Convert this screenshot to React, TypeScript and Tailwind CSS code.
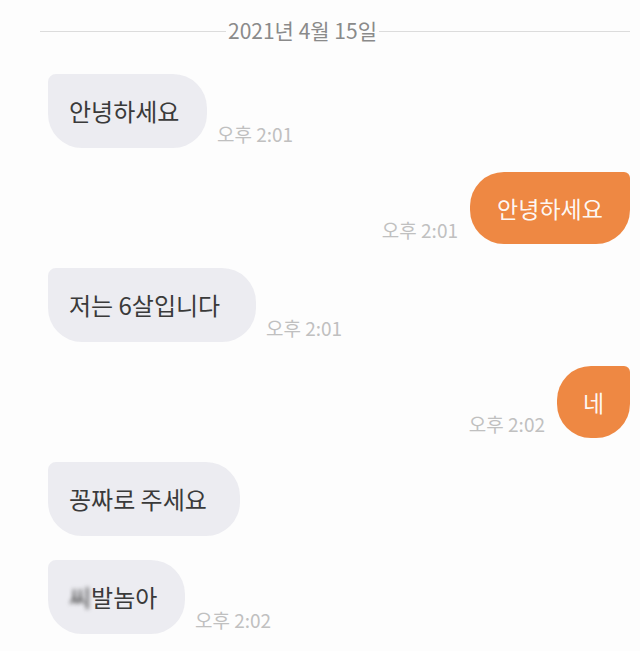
import { ReactNode } from 'react';

const FONT = { fontFamily: '"Noto Sans CJK KR", "Noto Sans", sans-serif' };

function Time({ children }: { children: ReactNode }) {
  return <span className="mb-[5px] text-[19px] leading-none text-[#c0c0c0] whitespace-nowrap">{children}</span>;
}

function Received({ children, time, width }: { children: ReactNode; time?: string; width: number }) {
  return (
    <div className="flex items-end gap-[10px]">
      <div
        className="flex h-[74px] items-center rounded-[34px] rounded-tl-[8px] bg-[#ececf1] pl-[21px] text-[24px] text-[#3a3a3a]"
        style={{ width }}
      >
        {children}
      </div>
      {time && <Time>{time}</Time>}
    </div>
  );
}

function Sent({ children, time, width }: { children: ReactNode; time: string; width: number }) {
  return (
    <div className="flex items-end justify-end gap-[12px]">
      <Time>{time}</Time>
      <div
        className="flex h-[72px] items-center justify-center rounded-[34px] rounded-tr-[6px] bg-[#ee8843] text-[23px] text-white/95"
        style={{ width }}
      >
        {children}
      </div>
    </div>
  );
}

export default function App() {
  return (
    <div className="h-[651px] w-[640px] overflow-hidden bg-[#fdfdfd] pl-[48px] pr-[10px]" style={FONT}>
      <div className="-ml-[8px] flex h-[60px] items-center pt-[2px]">
        <div className="h-px w-[186px] bg-[#dcdcdc]" />
        <span className="px-[2px] text-[21px] text-[#8a8a8a]">2021년 4월 15일</span>
        <div className="h-px flex-1 bg-[#dcdcdc]" />
      </div>
      <div className="mt-[14px] flex flex-col gap-[24px]">
        <Received time="오후 2:01" width={159}>안녕하세요</Received>
        <Sent time="오후 2:01" width={160}>안녕하세요</Sent>
        <Received time="오후 2:01" width={208}>저는 6살입니다</Received>
        <Sent time="오후 2:02" width={73}>네</Sent>
        <Received width={192}>꽁짜로 주세요</Received>
        <Received time="오후 2:02" width={137}>
          <span className="inline-block blur-[2px]">씨</span>발놈아
        </Received>
      </div>
    </div>
  );
}
